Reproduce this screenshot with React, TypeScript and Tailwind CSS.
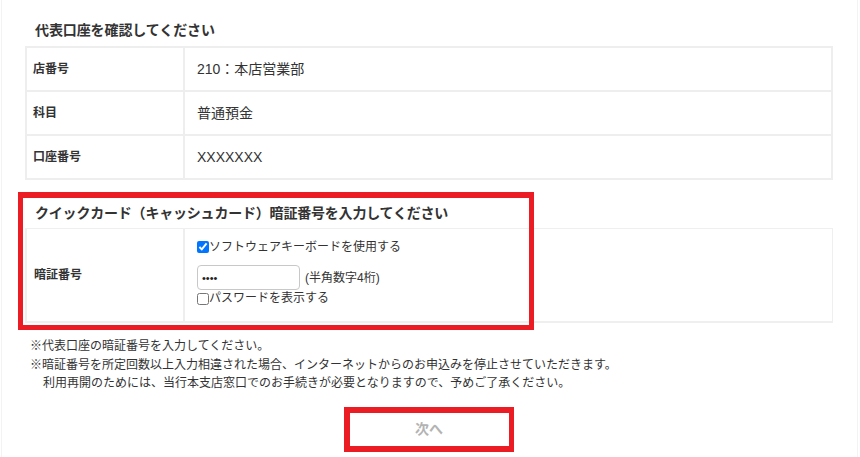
import React from "react";

const FONT = "font-['Liberation_Sans','Noto_Sans_CJK_JP',sans-serif]";

type Row = { label: string; value: string };

const accountRows: Row[] = [
  { label: "店番号", value: "210：本店営業部" },
  { label: "科目", value: "普通預金" },
  { label: "口座番号", value: "XXXXXXX" },
];

function AccountTable() {
  return (
    <div className="w-[808px] border-2 border-[#eeeeee]">
      {accountRows.map((r, i) => (
        <div
          key={r.label}
          className={`flex h-[42px] box-content ${i > 0 ? "border-t-2 border-[#eeeeee]" : ""}`}
        >
          <div className="w-[156px] flex items-center pl-[6px] text-[12px] font-bold text-[#333]">
            {r.label}
          </div>
          <div className="flex-1 flex items-center border-l-2 border-[#eeeeee] pl-[12px] text-[14px] text-[#333]">
            {r.value}
          </div>
        </div>
      ))}
    </div>
  );
}

function PinTable() {
  return (
    <div className="w-[808px] border-2 border-t border-r border-[#efefef] flex">
      <div className="w-[156px] flex items-center pl-[7px] text-[12px] font-bold text-[#333]">
        暗証番号
      </div>
      <div className="flex-1 border-l-2 border-[#eeeeee] pl-[12px] pt-[9px] pb-[14px] text-[12px] text-[#333]">
        <label className="flex items-center h-[18px] leading-[18px]">
          <input type="checkbox" defaultChecked className="m-0 w-[12px] h-[12px]" />
          <span>ソフトウェアキーボードを使用する</span>
        </label>
        <div className="flex items-center mt-[9px]">
          <input
            type="password"
            defaultValue="1234"
            readOnly
            className="w-[103px] h-[25px] border border-[#c8c8c8] rounded-[4px] px-[4px] text-[11px] text-[#222] outline-none"
          />
          <span className="ml-[5px] leading-[18px]">(半角数字4桁)</span>
        </div>
        <label className="flex items-center h-[17px] leading-[17px]">
          <input type="checkbox" className="m-0 w-[12px] h-[12px]" />
          <span>パスワードを表示する</span>
        </label>
      </div>
    </div>
  );
}

export default function App() {
  return (
    <div className={`w-[860px] h-[457px] bg-white overflow-hidden ${FONT}`}>
      <div className="ml-[1px] w-[857px] h-full border-x border-[#f3f3f3] pl-[23px] pr-[24px]">
        <h2 className="h-[46px] pt-[20px] pl-[10px] text-[14px] leading-[20px] font-bold text-[#333] tracking-[-0.1px]">
          代表口座を確認してください
        </h2>
        <AccountTable />

        <div className="relative">
          <h2 className="h-[48px] pt-[23px] pl-[10px] text-[14px] leading-[20px] font-bold text-[#333] tracking-[-0.2px]">
            クイックカード（キャッシュカード）暗証番号を入力してください
          </h2>
          <PinTable />
          <div className="absolute left-[-7px] top-[12px] w-[516px] h-[138px] border-[5px] border-t-[6px] border-[#ec1c24] pointer-events-none" />
        </div>

        <div className="mt-[14px] pl-[5px] text-[12px] leading-[18.5px] text-[#333]">
          <p>※代表口座の暗証番号を入力してください。</p>
          <p>※暗証番号を所定回数以上入力相違された場合、インターネットからのお申込みを停止させていただきます。</p>
          <p className="pl-[13px]">利用再開のためには、当行本支店窓口でのお手続きが必要となりますので、予めご了承ください。</p>
        </div>

        <div className="flex justify-center mt-[20px]">
          <div className="relative">
            <button
              type="button"
              disabled
              className="w-[159px] h-[34px] bg-white text-[14px] font-bold text-[#b3b3b3]"
            >
              次へ
            </button>
            <div className="absolute left-[-6px] top-[-6px] right-[-5px] bottom-[-5px] border-[6px] border-r-[5px] border-[#ec1c24] pointer-events-none" />
          </div>
        </div>
      </div>
    </div>
  );
}
